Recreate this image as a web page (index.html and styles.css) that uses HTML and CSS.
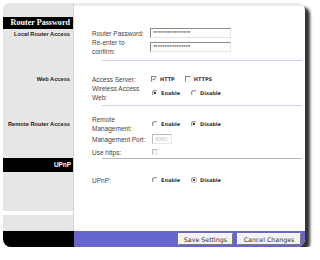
FILE: index.html
```html
<!DOCTYPE html>
<html lang="en">
<head>
  <meta charset="UTF-8">
  <title>Administration - Management</title>
  <link rel="stylesheet" href="styles.css">
</head>
<body>
  <div class="frame">
    <div class="main">
      <div class="side">
        <div class="cap"></div>
        <div class="bar title">Router Password</div>
        <div class="sect s1">Local Router Access</div>
        <div class="sect s2">Web Access</div>
        <div class="sect s3">Remote Router Access</div>
        <div class="bar upnp">UPnP</div>
        <div class="fill"></div>
        <div class="gap"></div>
        <div class="fill2"></div>
      </div>

      <div class="content">
        <div class="row r1">
          <span class="lbl">Router Password:</span>
          <span class="field pw">****************</span>
        </div>
        <div class="row r2">
          <span class="lbl">Re-enter to<br>confirm:</span>
          <span class="field pw">****************</span>
        </div>
        <div class="sep"></div>

        <div class="row r3">
          <span class="lbl">Access Server:</span>
          <span class="cb on"><svg viewBox="0 0 6 6"><path d="M1 3 L2.4 4.6 L5 1.2" fill="none" stroke="#222" stroke-width="1"/></svg></span>
          <b class="opt">HTTP</b>
          <span class="cb"></span>
          <b class="opt">HTTPS</b>
        </div>
        <div class="row r4">
          <span class="lbl">Wireless Access<br>Web:</span>
          <span class="rb on"></span>
          <b class="opt">Enable</b>
          <span class="rb"></span>
          <b class="opt">Disable</b>
        </div>
        <div class="sep s-b"></div>

        <div class="row r5">
          <span class="lbl">Remote<br>Management:</span>
          <span class="rb"></span>
          <b class="opt">Enable</b>
          <span class="rb on"></span>
          <b class="opt">Disable</b>
        </div>
        <div class="row r6">
          <span class="lbl">Management Port:</span>
          <span class="field port">8080</span>
        </div>
        <div class="row r7">
          <span class="lbl">Use https:</span>
          <span class="cb off"></span>
        </div>
        <div class="sep s-c"></div>

        <div class="row r8">
          <span class="lbl">UPnP:</span>
          <span class="rb"></span>
          <b class="opt">Enable</b>
          <span class="rb on dim"></span>
          <b class="opt">Disable</b>
        </div>
      </div>
    </div>

    <div class="foot">
      <div class="foot-side"></div>
      <div class="foot-bar">
        <button class="btn">Save Settings</button>
        <button class="btn">Cancel Changes</button>
      </div>
    </div>
  </div>
</body>
</html>
```

FILE: styles.css
```css
*{margin:0;padding:0;box-sizing:border-box;}
body{background:#fff;font-family:"Liberation Sans", Arial, sans-serif;}

.frame{width:302px;margin:3px 0 0 3px;border-radius:6px 7px 8px 8px;overflow:hidden;background:#fff;box-shadow:5px 4px 3px rgba(0,0,0,.8);}
.main{display:flex;height:228px;}

/* left column */
.side{width:71px;background:#e6e6e6;border-right:1px solid #d2d2d2;display:flex;flex-direction:column;}
.cap{height:14px;}
.bar{background:#000;color:#fff;text-align:right;padding-right:3px;font-weight:bold;}
.title{height:12px;line-height:12px;font-family:"Liberation Serif", "Times New Roman", serif;font-size:8.1px;}
.upnp{height:14px;line-height:14px;font-size:6.4px;padding-right:2px;}
.sect{text-align:right;padding:1px 3px 0 0;line-height:8px;font-size:5.7px;font-weight:bold;color:#222;}
.s1{height:46px;}
.s2{height:45px;padding-top:0;}
.s3{height:38px;padding-top:0;}
.fill{height:39px;}
.gap{height:4px;background:#fff;}
.fill2{flex:1;}

/* right column */
.content{flex:1;border-top:3px solid #ececec;padding-top:22px;}
.row{display:flex;align-items:center;padding-left:18px;height:10px;}
.r2,.r4,.r5{height:18px;}
.r3{margin-top:13px;}
.r5{margin-top:9px;}
.r6{margin-top:1px;}
.r7{margin-top:3px;}
.r8{margin-top:16px;}
.lbl{width:58px;font-size:6.5px;line-height:9px;color:#444;}
.field{height:10px;border:1px solid;border-color:#8a8a8a #e4e4e4 #e4e4e4 #8a8a8a;background:#fff;font-size:6px;line-height:9px;padding-left:2px;color:#444;overflow:hidden;}
.pw{width:81px;}
.port{width:20px;margin-left:2px;color:#c8c8c8;font-size:5.5px;line-height:8px;border-color:#bbb #e8e8e8 #e8e8e8 #bbb;}
.sep{height:1px;background:#cfcfe8;margin:4px 3px 0 28px;}
.s-b{margin-top:3px;}
.s-c{margin-top:1px;background:#b8b8b8;}

.cb{width:6px;height:6px;margin:0 3px 0 1px;border:1px solid;border-color:#808080 #eee #eee #808080;background:#fff;display:inline-flex;}
.cb svg{width:100%;height:100%;}
.cb.off{margin-left:2px;border-color:#bbb #eee #eee #bbb;background:#f2f2f2;}
.rb{width:6px;height:6px;margin:0 3px 0 2px;border:1px solid;border-color:#8c8c8c #fff #fff #8c8c8c;border-radius:50%;background:#fff;}
.rb.on{background:radial-gradient(circle, #333 0 1px, #fff 1.3px);}
.rb.dim{border-color:#999 #bbb #bbb #999;background:radial-gradient(circle, #444 0 1px, #fff 1.3px);}
.opt{font-family:"DejaVu Sans", Verdana, sans-serif;font-size:5px;font-weight:bold;color:#333;margin-right:9px;}

/* footer */
.foot{display:flex;height:16px;}
.foot-side{width:71px;background:#000;}
.foot-bar{flex:1;background:#6666cc;display:flex;justify-content:flex-end;align-items:center;gap:4px;padding-right:4px;}
.btn{height:12px;padding:0;border:1px solid;border-color:#fff #7a7a7a #7a7a7a #fff;background:#f2f2f2;font-family:"DejaVu Sans", Verdana, sans-serif;font-size:6.3px;color:#333;}
.btn:first-child{width:55px;}
.btn:last-child{width:64px;}
```
